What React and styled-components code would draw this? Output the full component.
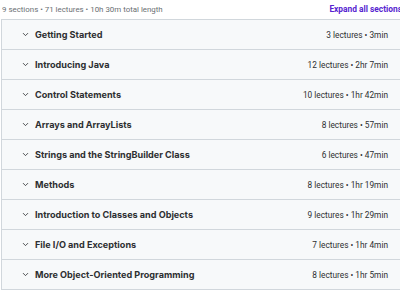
import React from 'react';
import styled, { createGlobalStyle } from 'styled-components';
import { ChevronDown } from 'lucide-react';

const sections = [
    { title: 'Getting Started', meta: '3 lectures • 3min' },
    { title: 'Introducing Java', meta: '12 lectures • 2hr 7min' },
    { title: 'Control Statements', meta: '10 lectures • 1hr 42min' },
    { title: 'Arrays and ArrayLists', meta: '8 lectures • 57min' },
    { title: 'Strings and the StringBuilder Class', meta: '6 lectures • 47min' },
    { title: 'Methods', meta: '8 lectures • 1hr 19min' },
    { title: 'Introduction to Classes and Objects', meta: '9 lectures • 1hr 29min' },
    { title: 'File I/O and Exceptions', meta: '7 lectures • 1hr 4min' },
    { title: 'More Object-Oriented Programming', meta: '8 lectures • 1hr 5min' },
];

const App = () => {
    return (
        <>
            <GlobalStyle />
            <Wrapper>
                <Header>
                    <Summary>9 sections • 71 lectures • 10h 30m total length</Summary>
                    <ExpandAll>Expand all sections</ExpandAll>
                </Header>
                <Panel>
                    {sections.map((s) => (
                        <Row key={s.title}>
                            <Chevron><ChevronDown size={9} strokeWidth={2.2} /></Chevron>
                            <Title>{s.title}</Title>
                            <Meta>{s.meta}</Meta>
                        </Row>
                    ))}
                </Panel>
            </Wrapper>
        </>
    );
};

export default App;

const GlobalStyle = createGlobalStyle`
body{
    margin: 0;
    background: #fff;
    overflow: hidden;
    font-family: Roboto, "Noto Sans", sans-serif;
    color: #2d2f31;
}
`

const Wrapper = styled.div`
width: 402px;
`

const Header = styled.div`
display: flex;
align-items: center;
justify-content: space-between;
height: 19px;
padding: 0 0 1px 2px;
box-sizing: border-box;
`

const Summary = styled.span`
font-size: 7.9px;
color: #6a6f73;
`

const ExpandAll = styled.span`
font-size: 8.4px;
font-weight: 700;
color: #5624d0;
`

const Panel = styled.div`
border: 1px solid #d1d7dc;
border-bottom: none;
margin-left: 1px;
`

const Row = styled.div`
display: flex;
align-items: center;
height: 29px;
padding: 0 13px 0 19px;
background: #f7f9fa;
border-bottom: 1px solid #d1d7dc;
`

const Chevron = styled.span`
display: flex;
width: 14px;
color: #2d2f31;
`

const Title = styled.span`
flex: 1;
font-family: Inter, Roboto, sans-serif;
font-size: 9.1px;
font-weight: 700;
`

const Meta = styled.span`
font-size: 8.3px;
color: #2d2f31;
`
